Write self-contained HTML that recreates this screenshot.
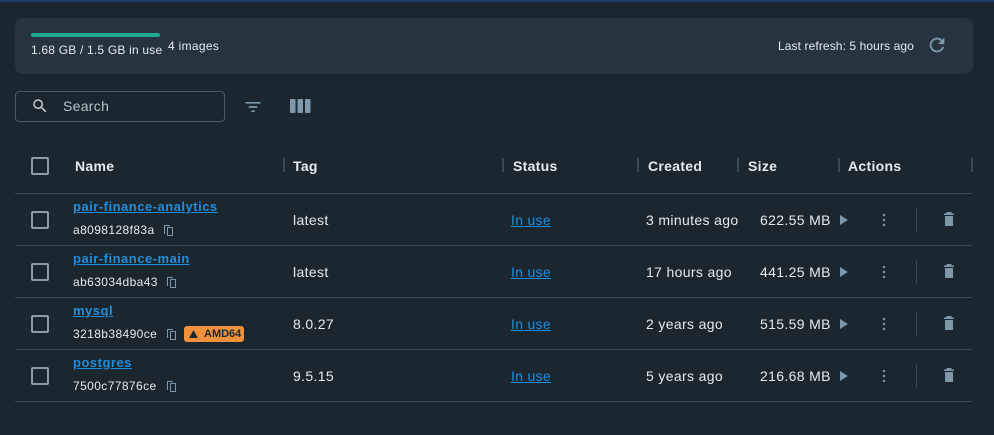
<!DOCTYPE html>
<html><head><style>
*{box-sizing:border-box;margin:0;padding:0}
body{width:994px;height:435px;background:#1c262e;font-family:"Liberation Sans",sans-serif;color:#e6eaed;position:relative;overflow:hidden}
.a{position:absolute}
.topline{left:0;top:0;width:994px;height:2px;background:#1d3b66}
.panel{left:15px;top:18px;width:958px;height:56px;background:#27343f;border-radius:8px}
.cb{position:absolute;left:31px;width:18px;height:18px;border:2px solid #8c9ba6;border-radius:2px}
.hd{position:absolute;top:158px;font-size:14px;font-weight:bold;color:#e6eaed;letter-spacing:0.3px}
.dv{position:absolute;top:158px;width:2px;height:14px;background:#3c4a55}
.hl{position:absolute;left:15px;width:957px;height:1px;background:#3a4852}
.lnk{color:#1d8fe0;text-decoration:underline;font-size:13px;font-weight:bold;letter-spacing:0.5px}
.txt{font-size:14px;color:#e6eaed;letter-spacing:0.35px}
.id{font-size:12px;color:#e6eaed;letter-spacing:0.4px}
.st{color:#1d8fe0;text-decoration:underline;font-size:14px;letter-spacing:0.3px}
</style></head><body>
<div class="a topline"></div>
<div class="a panel"></div>
<div class="a" style="left:31px;top:33px;width:129px;height:4px;background:#1fa78f;border-radius:2px"></div>
<div class="a" style="left:31px;top:43px;font-size:12px;letter-spacing:0.2px">1.68 GB / 1.5 GB in use</div>
<div class="a" style="left:168px;top:39px;font-size:12px;letter-spacing:0.3px">4 images</div>
<div class="a" style="left:778px;top:39px;font-size:12px;letter-spacing:0.1px">Last refresh: 5 hours ago</div>
<svg class="a" style="left:926px;top:34px" width="22" height="22" viewBox="0 0 24 24"><path d="M17.65 6.35A7.96 7.96 0 0 0 12 4a8 8 0 1 0 7.73 10h-2.08A6 6 0 1 1 12 6c1.66 0 3.14.69 4.22 1.78L13 11h7V4l-2.35 2.35z" fill="#7d98ab"/></svg>
<div class="a" style="left:15px;top:91px;width:210px;height:31px;border:1px solid #4b5a66;border-radius:4px"></div>
<svg class="a" style="left:31px;top:97px" width="18" height="18" viewBox="0 0 24 24"><path d="M15.5 14h-.79l-.28-.27A6.47 6.47 0 0 0 16 9.5 6.5 6.5 0 1 0 9.5 16c1.61 0 3.09-.59 4.23-1.57l.27.28v.79l5 4.99L20.49 19l-4.99-5zm-6 0C7.01 14 5 11.99 5 9.5S7.01 5 9.5 5 14 7.01 14 9.5 11.99 14 9.5 14z" fill="#c5ced5"/></svg>
<div class="a" style="left:63px;top:98px;font-size:14px;color:#b8c2ca;letter-spacing:0.3px">Search</div>
<svg class="a" style="left:243px;top:97px" width="20" height="20" viewBox="0 0 24 24"><path d="M3 6h18v2H3zm4 5h10v2H7zm3 5h4v2h-4z" fill="#7d98ab"/></svg>
<svg class="a" style="left:290px;top:97px" width="21" height="18" viewBox="0 0 21 18"><rect x="0" y="2" width="5.5" height="14" rx="1" fill="#7d98ab"/><rect x="7.5" y="2" width="5.5" height="14" rx="1" fill="#7d98ab"/><rect x="15" y="2" width="5.5" height="14" rx="1" fill="#7d98ab"/></svg>
<div class="cb" style="top:157px"></div>
<div class="hd" style="left:75px">Name</div>
<div class="dv" style="left:283px"></div><div class="hd" style="left:293px">Tag</div>
<div class="dv" style="left:502px"></div><div class="hd" style="left:513px">Status</div>
<div class="dv" style="left:637px"></div><div class="hd" style="left:648px">Created</div>
<div class="dv" style="left:737px"></div><div class="hd" style="left:748px">Size</div>
<div class="dv" style="left:838px"></div><div class="hd" style="left:848px">Actions</div>
<div class="dv" style="left:971px"></div>
<div class="hl" style="top:193px"></div>
<div class="hl" style="top:245px"></div>
<div class="hl" style="top:297px"></div>
<div class="hl" style="top:349px"></div>
<div class="hl" style="top:401px"></div>

<!-- row1 -->
<div class="cb" style="top:211px"></div>
<div class="a lnk" style="left:73px;top:199px">pair-finance-analytics</div>
<div class="a id" style="left:73px;top:223px">a8098128f83a</div>
<svg class="a" style="left:163px;top:224px" width="12" height="13" viewBox="0 0 12 13"><path d="M1 1h6v1H2v8H1z M4 3h6v9H4z M5 4v7h4V4z" fill="#7d98ab" fill-rule="evenodd"/></svg>
<div class="a txt" style="left:293px;top:212px">latest</div>
<div class="a st" style="left:511px;top:212px">In use</div>
<div class="a txt" style="left:646px;top:212px">3 minutes ago</div>
<div class="a txt" style="left:760px;top:212px">622.55 MB</div>
<!-- row2 -->
<div class="cb" style="top:263px"></div>
<div class="a lnk" style="left:73px;top:251px">pair-finance-main</div>
<div class="a id" style="left:73px;top:275px">ab63034dba43</div>
<svg class="a" style="left:166px;top:276px" width="12" height="13" viewBox="0 0 12 13"><path d="M1 1h6v1H2v8H1z M4 3h6v9H4z M5 4v7h4V4z" fill="#7d98ab" fill-rule="evenodd"/></svg>
<div class="a txt" style="left:293px;top:264px">latest</div>
<div class="a st" style="left:511px;top:264px">In use</div>
<div class="a txt" style="left:646px;top:264px">17 hours ago</div>
<div class="a txt" style="left:760px;top:264px">441.25 MB</div>
<!-- row3 -->
<div class="cb" style="top:315px"></div>
<div class="a lnk" style="left:73px;top:303px">mysql</div>
<div class="a id" style="left:73px;top:327px">3218b38490ce</div>
<svg class="a" style="left:166px;top:328px" width="12" height="13" viewBox="0 0 12 13"><path d="M1 1h6v1H2v8H1z M4 3h6v9H4z M5 4v7h4V4z" fill="#7d98ab" fill-rule="evenodd"/></svg>
<div class="a" style="left:184px;top:326px;width:60px;height:16px;background:#f0923c;border-radius:3px;font-size:11px;font-weight:bold;color:#1c262e;padding:2px 0 0 20px">AMD64</div>
<svg class="a" style="left:189px;top:330px" width="9" height="8" viewBox="0 0 11 10"><path d="M5.5 0L11 10H0z" fill="#1c262e"/></svg>
<div class="a txt" style="left:293px;top:316px">8.0.27</div>
<div class="a st" style="left:511px;top:316px">In use</div>
<div class="a txt" style="left:646px;top:316px">2 years ago</div>
<div class="a txt" style="left:760px;top:316px">515.59 MB</div>
<!-- row4 -->
<div class="cb" style="top:367px"></div>
<div class="a lnk" style="left:73px;top:355px">postgres</div>
<div class="a id" style="left:73px;top:379px">7500c77876ce</div>
<svg class="a" style="left:166px;top:380px" width="12" height="13" viewBox="0 0 12 13"><path d="M1 1h6v1H2v8H1z M4 3h6v9H4z M5 4v7h4V4z" fill="#7d98ab" fill-rule="evenodd"/></svg>
<div class="a txt" style="left:293px;top:368px">9.5.15</div>
<div class="a st" style="left:511px;top:368px">In use</div>
<div class="a txt" style="left:646px;top:368px">5 years ago</div>
<div class="a txt" style="left:760px;top:368px">216.68 MB</div>

<!-- actions -->
<svg class="a" style="left:838px;top:208px" width="120" height="190" viewBox="0 0 120 190">
<g fill="#7d98ab">
<g id="r"><path d="M2 7l8 5-8 5z"/><circle cx="46" cy="7" r="1.2"/><circle cx="46" cy="12" r="1.2"/><circle cx="46" cy="17" r="1.2"/><rect x="78" y="0" width="1" height="24" fill="#3a4852"/><path d="M106 5.5h10v1.5h-10z M108.5 4h5v1.5h-5z M107 8h8v10h-8z"/></g>
<use href="#r" y="52"/><use href="#r" y="104"/><use href="#r" y="156"/>
</g></svg>
</body></html>
